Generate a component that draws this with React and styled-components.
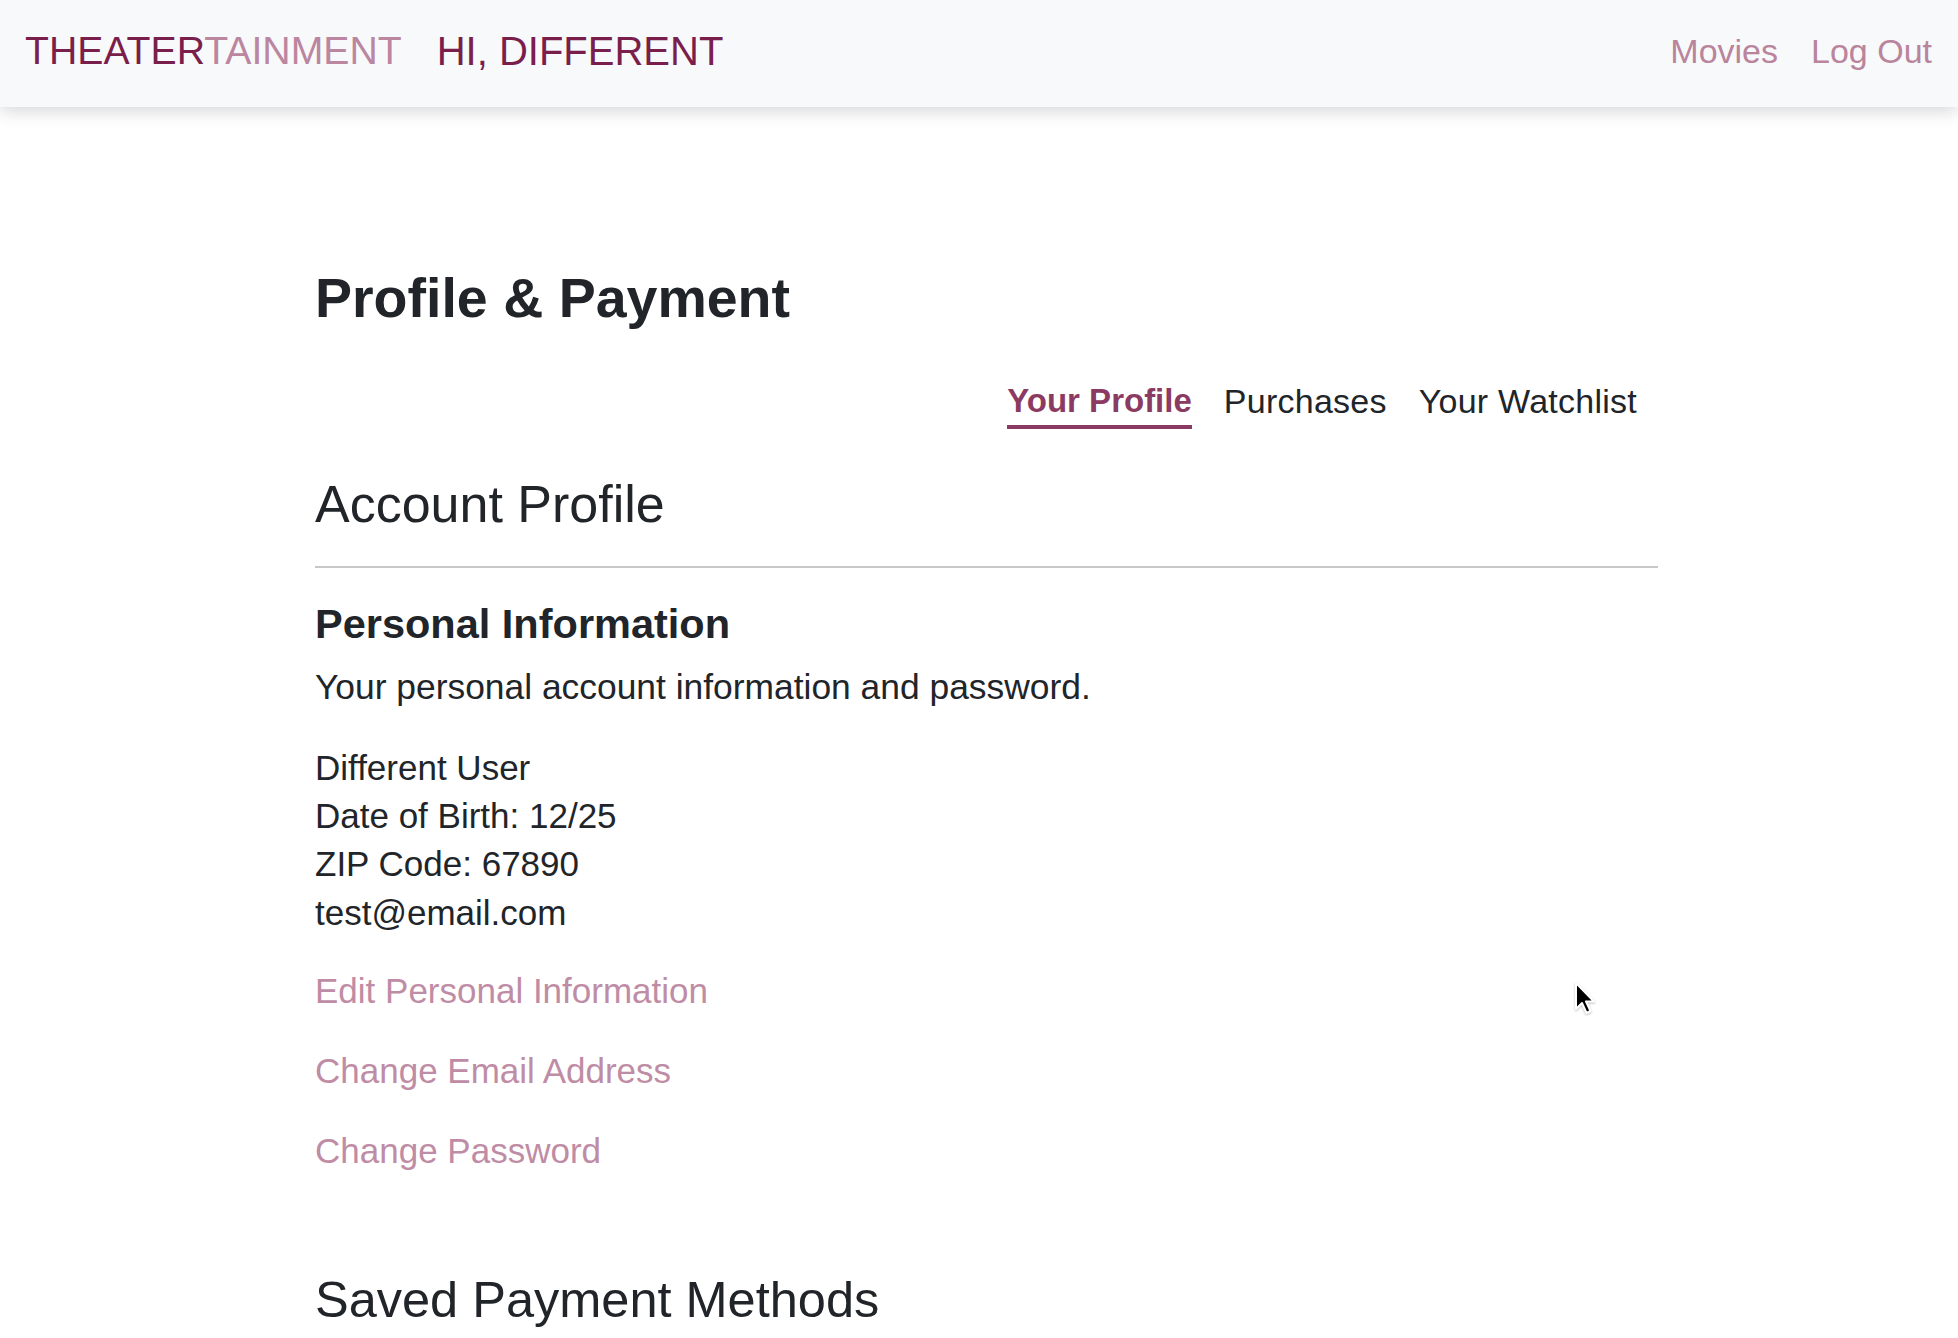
import React from "react";
import styled, { createGlobalStyle } from "styled-components";

const GlobalStyle = createGlobalStyle`
  html, body { margin: 0; padding: 0; background: #ffffff; }
  body {
    font-family: "Liberation Sans", Arial, sans-serif;
    color: #212529;
    overflow: hidden;
  }
  * { box-sizing: border-box; }
`;

const Page = styled.div`
  position: relative;
  width: 1958px;
  height: 1338px;
  overflow: hidden;
`;

const Header = styled.header`
  height: 107px;
  background: #f8f9fb;
  box-shadow: 0 5px 16px rgba(0, 0, 0, 0.15);
  display: flex;
  align-items: center;
  justify-content: space-between;
  padding: 0 26px 5px 25px;
  position: relative;
  z-index: 1;
`;

const Brand = styled.div`
  display: flex;
  align-items: center;
  gap: 35px;
  line-height: 1;
`;

const LogoText = styled.span`
  font-size: 39.2px;
`;

const Logo = styled.span`
  color: #7a1f4c;
`;

const LogoLight = styled.span`
  color: #bb869f;
`;

const Greeting = styled.span`
  font-size: 40px;
  color: #7a1f4c;
`;

const Nav = styled.nav`
  display: flex;
  align-items: center;
  gap: 33px;
  padding-bottom: 1px;
`;

const NavLink = styled.a`
  font-size: 34px;
  line-height: 1;
  color: #b9849c;
  text-decoration: none;
`;

const Main = styled.main`
  width: 1343px;
  margin-left: 315px;
  padding-top: 158px;
`;

const Title = styled.h1`
  margin: 0;
  font-size: 55.5px;
  line-height: 1.2;
  font-weight: 700;
  color: #212529;
`;

const Tabs = styled.div`
  display: flex;
  justify-content: flex-end;
  align-items: flex-end;
  gap: 32px;
  padding-right: 21px;
  margin-top: 49px;
`;

const Tab = styled.a`
  font-size: ${(p) => (p.$active ? "33px" : "34px")};
  line-height: 40.8px;
  padding-bottom: 4px;
  text-decoration: none;
  letter-spacing: ${(p) => (p.$active ? "0" : "0.25px")};
  color: ${(p) => (p.$active ? "#8b3a62" : "#212529")};
  font-weight: ${(p) => (p.$active ? 700 : 400)};
  border-bottom: 4px solid ${(p) => (p.$active ? "#8b3a62" : "transparent")};
`;

const SectionTitle = styled.h2`
  margin: ${(p) => p.$mt || "0"} 0 0;
  font-size: ${(p) => p.$size || "51px"};
  line-height: 61.2px;
  font-weight: 400;
  color: #212529;
`;

const Divider = styled.hr`
  margin: 30px 0 0;
  border: none;
  border-top: 2px solid #c8c8c8;
  height: 0;
`;

const SubTitle = styled.h3`
  margin: 31px 0 0;
  font-size: 41.5px;
  line-height: 49.2px;
  font-weight: 700;
  color: #212529;
`;

const Description = styled.p`
  margin: 15px 0 0;
  font-size: 35.4px;
  line-height: 49px;
  color: #212529;
`;

const InfoList = styled.div`
  margin-top: 32px;
  display: flex;
  flex-direction: column;
`;

const InfoLine = styled.div`
  font-size: 35px;
  line-height: 48.3px;
  color: #212529;
`;

const Actions = styled.div`
  margin-top: 30px;
  display: flex;
  flex-direction: column;
  align-items: flex-start;
  gap: 32px;
`;

const ActionLink = styled.a`
  font-size: 35px;
  line-height: 48px;
  color: #bf8ca5;
  text-decoration: none;
`;

const Cursor = styled.svg`
  position: absolute;
  left: 1574px;
  top: 982px;
  width: 24px;
  height: 34px;
  filter: drop-shadow(0 1px 1px rgba(0, 0, 0, 0.25));
`;

export default function App() {
  return (
    <>
      <GlobalStyle />
      <Page>
        <Header>
          <Brand>
            <LogoText>
              <Logo>THEATER</Logo>
              <LogoLight>TAINMENT</LogoLight>
            </LogoText>
            <Greeting>HI, DIFFERENT</Greeting>
          </Brand>
          <Nav>
            <NavLink href="#">Movies</NavLink>
            <NavLink href="#">Log Out</NavLink>
          </Nav>
        </Header>
        <Main>
          <Title>Profile &amp; Payment</Title>
          <Tabs>
            <Tab href="#" $active>Your Profile</Tab>
            <Tab href="#">Purchases</Tab>
            <Tab href="#">Your Watchlist</Tab>
          </Tabs>
          <SectionTitle $mt="45px" $size="52px">Account Profile</SectionTitle>
          <Divider />
          <SubTitle>Personal Information</SubTitle>
          <Description>Your personal account information and password.</Description>
          <InfoList>
            <InfoLine>Different User</InfoLine>
            <InfoLine>Date of Birth: 12/25</InfoLine>
            <InfoLine>ZIP Code: 67890</InfoLine>
            <InfoLine>test@email.com</InfoLine>
          </InfoList>
          <Actions>
            <ActionLink href="#">Edit Personal Information</ActionLink>
            <ActionLink href="#">Change Email Address</ActionLink>
            <ActionLink href="#">Change Password</ActionLink>
          </Actions>
          <SectionTitle $mt="94px" $size="50.5px">Saved Payment Methods</SectionTitle>
        </Main>
        <Cursor viewBox="0 0 24 34">
          <path d="M2 1 L2 27 L8 21 L12.5 31 L16.5 29 L12 19.5 L20 19.5 Z" fill="#000" stroke="#fff" strokeWidth="2" strokeLinejoin="round" />
        </Cursor>
      </Page>
    </>
  );
}
